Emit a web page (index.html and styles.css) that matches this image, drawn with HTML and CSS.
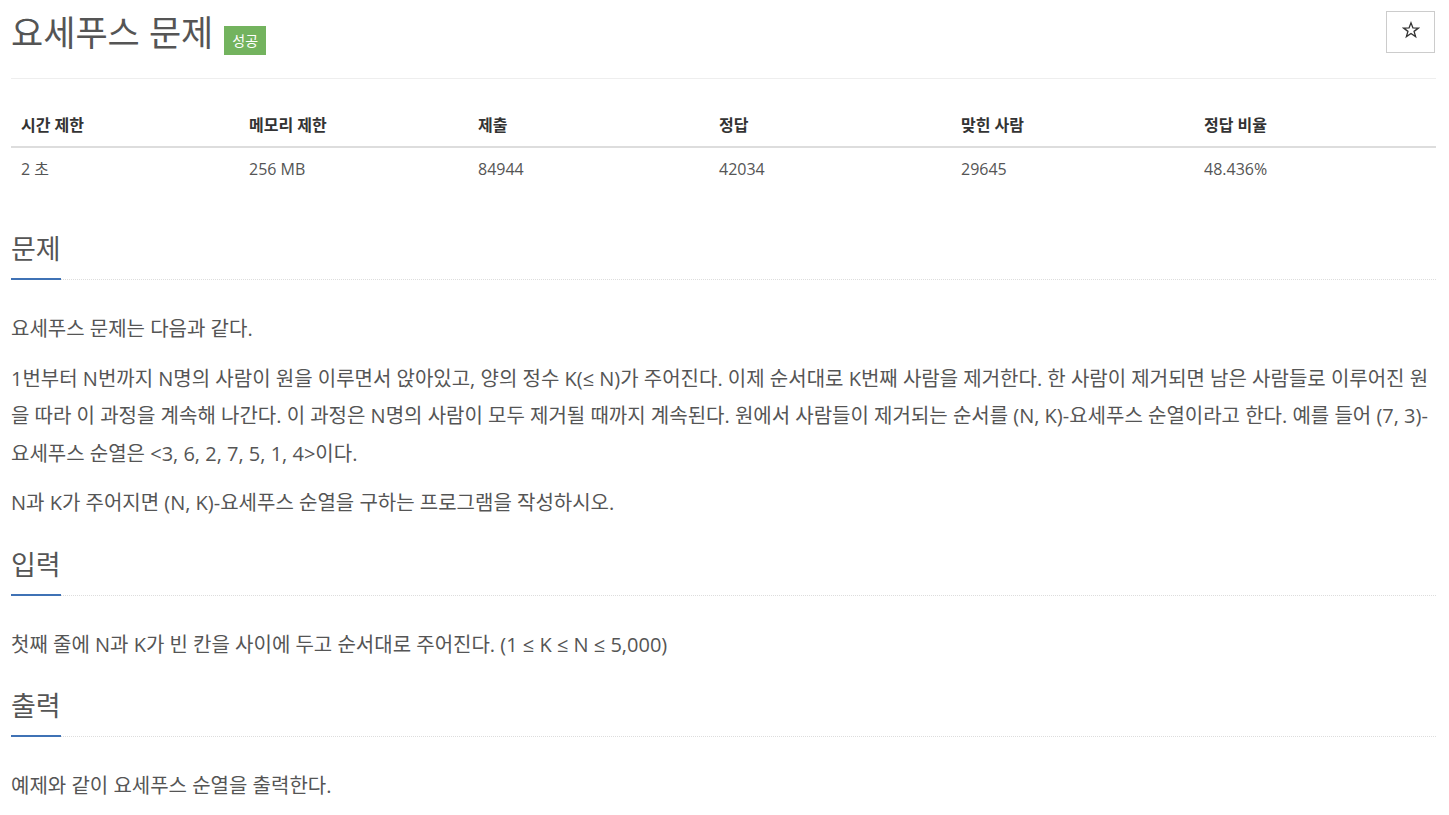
FILE: index.html
```html
<!DOCTYPE html>
<html lang="ko">
<head>
  <meta charset="UTF-8" />
  <meta name="viewport" content="width=device-width, initial-scale=1.0"/>
  <title>요세푸스 문제</title>
  <link rel="stylesheet" href="styles.css">
</head>
<body>

  <!-- Problem title -->
  <div class="page-header">
    <h1>
      <span class="problem-title">요세푸스 문제</span>
      <span class="label-success">성공</span>
    </h1>
    <button class="star-btn" title="즐겨찾기">
      <svg width="18" height="18" viewBox="0 0 24 24">
        <polygon points="12,2.5 14.6,9.2 21.8,9.4 16.1,13.8 18.1,20.8 12,16.7 5.9,20.8 7.9,13.8 2.2,9.4 9.4,9.2"
                 fill="none" stroke="#333" stroke-width="1.8" stroke-linejoin="miter"/>
      </svg>
    </button>
  </div>

  <!-- Limits / stats -->
  <table class="problem-info">
    <colgroup>
      <col style="width: 228px">
      <col style="width: 229px">
      <col style="width: 241px">
      <col style="width: 242px">
      <col style="width: 243px">
      <col style="width: 242px">
    </colgroup>
    <thead>
      <tr>
        <th>시간 제한</th>
        <th>메모리 제한</th>
        <th>제출</th>
        <th>정답</th>
        <th>맞힌 사람</th>
        <th>정답 비율</th>
      </tr>
    </thead>
    <tbody>
      <tr>
        <td>2 초</td>
        <td>256 MB</td>
        <td>84944</td>
        <td>42034</td>
        <td>29645</td>
        <td>48.436%</td>
      </tr>
    </tbody>
  </table>

  <section class="problem-section">
    <div class="headline"><h2>문제</h2></div>
    <div class="problem-text">
      <p>요세푸스 문제는 다음과 같다.</p>
      <p>1번부터 N번까지 N명의 사람이 원을 이루면서 앉아있고, 양의 정수 K(≤ N)가 주어진다. 이제 순서대로 K번째 사람을 제거한다. 한 사람이 제거되면 남은 사람들로 이루어진 원을 따라 이 과정을 계속해 나간다. 이 과정은 N명의 사람이 모두 제거될 때까지 계속된다. 원에서 사람들이 제거되는 순서를 (N, K)-요세푸스 순열이라고 한다. 예를 들어 (7, 3)-요세푸스 순열은 &lt;3, 6, 2, 7, 5, 1, 4&gt;이다.</p>
      <p>N과 K가 주어지면 (N, K)-요세푸스 순열을 구하는 프로그램을 작성하시오.</p>
    </div>
  </section>

  <section class="problem-section">
    <div class="headline"><h2>입력</h2></div>
    <div class="problem-text">
      <p>첫째 줄에 N과 K가 빈 칸을 사이에 두고 순서대로 주어진다. (1 ≤ K ≤ N ≤ 5,000)</p>
    </div>
  </section>

  <section class="problem-section">
    <div class="headline"><h2>출력</h2></div>
    <div class="problem-text">
      <p>예제와 같이 요세푸스 순열을 출력한다.</p>
    </div>
  </section>

</body>
</html>
```

FILE: styles.css
```css
body {
  margin: 0;
  padding: 0 13px 0 11px;
  font-family: "Open Sans", "Noto Sans CJK KR", sans-serif;
  color: #555;
  background: #fff;
}

/* header */
.page-header {
  display: flex;
  justify-content: space-between;
  align-items: flex-start;
  height: 67px;
  padding-top: 11px;
  border-bottom: 1px solid #eee;
}

.page-header h1 {
  display: flex;
  align-items: flex-start;
  margin: 0;
  font-size: 35px;
  font-weight: normal;
  line-height: 44px;
  color: #555;
}

.label-success {
  margin: 15px 0 0 11px;
  padding: 0 8px;
  height: 29px;
  line-height: 29px;
  font-size: 14px;
  color: #fff;
  background-color: #73b35e;
}

.star-btn {
  width: 49px;
  height: 42px;
  margin-right: 1px;
  padding: 0 0 4px;
  border: 1px solid #ccc;
  background: #fff;
  display: flex;
  align-items: center;
  justify-content: center;
  cursor: pointer;
}

/* info table */
.problem-info {
  width: 1425px;
  margin: 27px 0 42px;
  border-collapse: collapse;
  table-layout: fixed;
  font-size: 16px;
}

.problem-info th,
.problem-info td {
  text-align: left;
  padding: 10px 10px;
  line-height: 22px;
}

.problem-info th {
  padding-top: 8px;
  font-weight: bold;
  color: #333;
  border-bottom: 2px solid #ddd;
}

.problem-info td {
  color: #555;
}

/* sections */
.problem-section {
  margin-top: 26px;
}

.problem-section:first-of-type {
  margin-top: 0;
}

.headline {
  border-bottom: 1px dotted #ddd;
  margin-bottom: 30px;
}

.headline h2 {
  display: inline-block;
  margin: 0 0 -1px;
  padding-bottom: 12px;
  font-size: 27px;
  font-weight: normal;
  line-height: 34px;
  color: #555;
  border-bottom: 2px solid #3f72b5;
}

.problem-text p {
  margin: 0 0 12px;
  font-size: 20px;
  line-height: 37.5px;
  color: #555;
}
```
